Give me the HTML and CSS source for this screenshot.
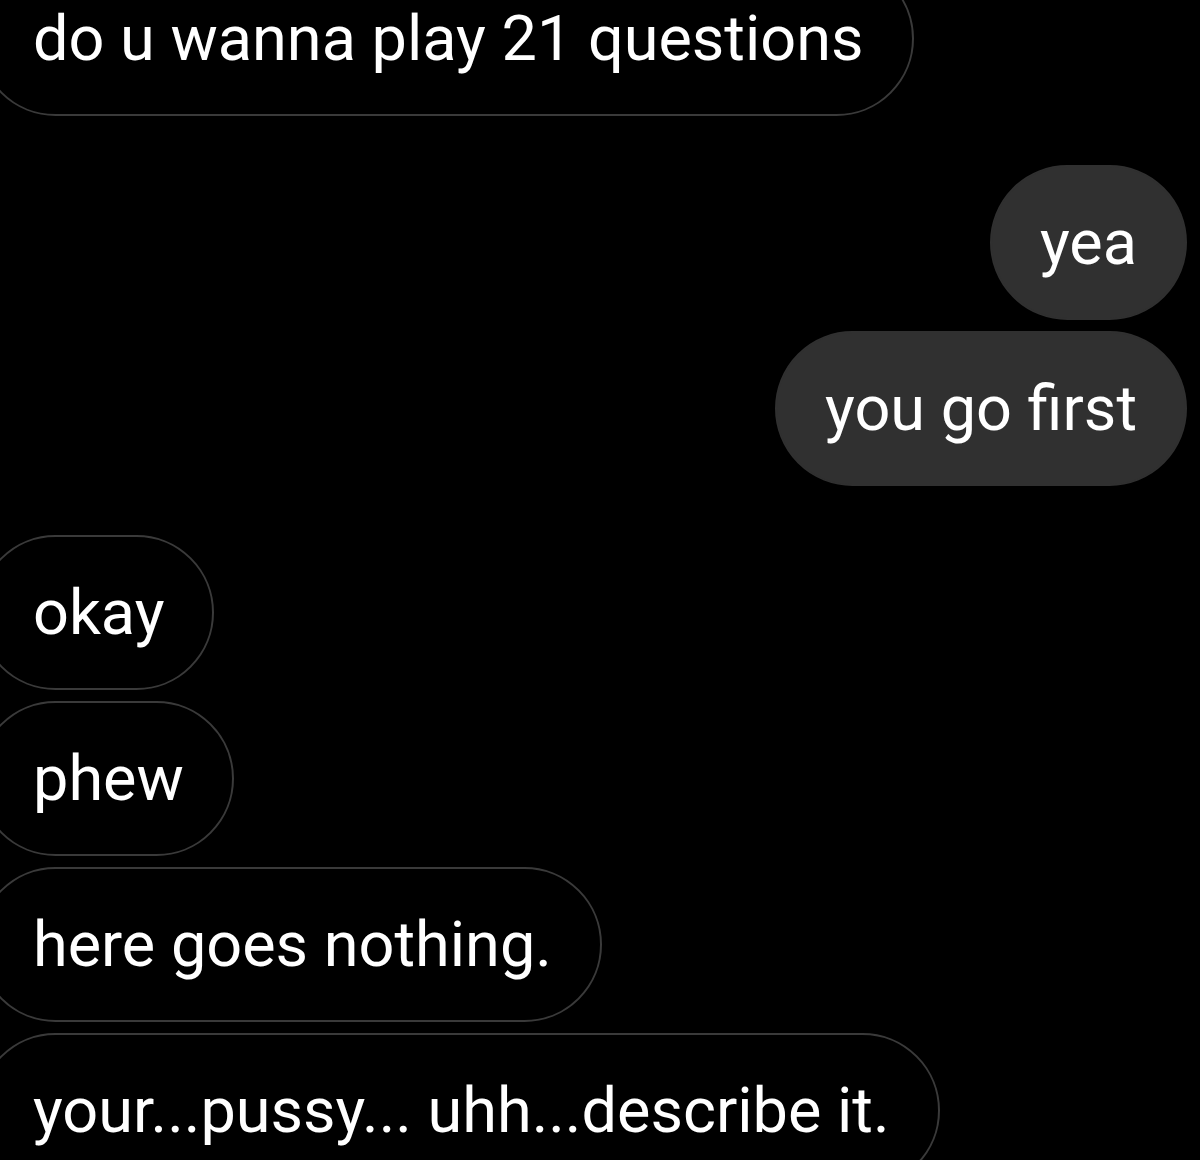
FILE: index.html
```html
<!DOCTYPE html>
<html lang="en">
<head>
    <meta charset="UTF-8">
    <title>Messages</title>
    <link rel="stylesheet" href="styles.css">
</head>
<body>
    <div class="chat">
        <div class="group incoming">
            <div class="bubble">do u wanna play 21 questions</div>
        </div>

        <div class="group outgoing">
            <div class="bubble">yea</div>
            <div class="bubble">you go first</div>
        </div>

        <div class="group incoming">
            <div class="bubble">okay</div>
            <div class="bubble">phew</div>
            <div class="bubble">here goes nothing.</div>
            <div class="bubble">your...pussy... uhh...describe it.</div>
        </div>
    </div>
</body>
</html>
```

FILE: styles.css
```css
body {
    margin: 0;
    background-color: #000;
    color: #fff;
    font-family: Roboto, 'Liberation Sans', Arial, sans-serif;
    overflow: hidden;
}

.chat {
    display: flex;
    flex-direction: column;
    gap: 49px;
    margin-top: -39px;
    padding-right: 13px;
}

.group {
    display: flex;
    flex-direction: column;
    gap: 11px;
}

.incoming {
    align-items: flex-start;
    margin-left: -22px;
}

.outgoing {
    align-items: flex-end;
}

.bubble {
    font-size: 63px;
    line-height: 77px;
    padding: 37px 48px;
    border-radius: 80px;
    white-space: nowrap;
}

.incoming .bubble {
    border: 2px solid #3a3a3a;
    padding-left: 53px;
}

.outgoing .bubble {
    background-color: #303030;
    border: 2px solid #303030;
}
```
